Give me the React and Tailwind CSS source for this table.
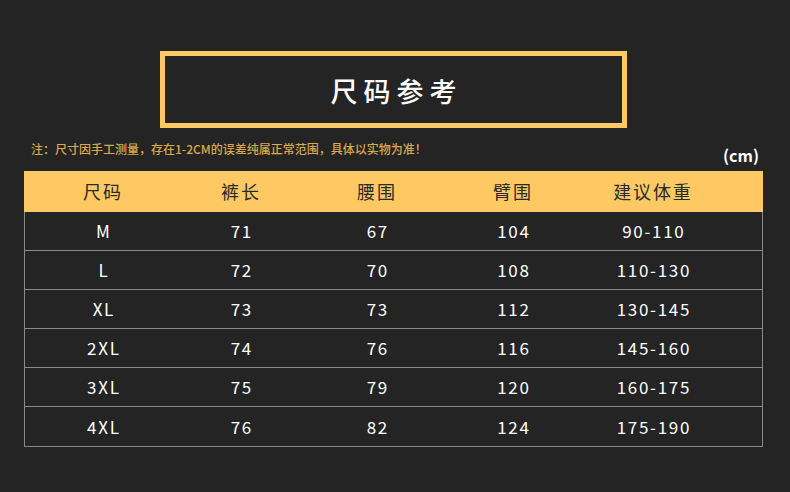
const headers = ['尺码', '裤长', '腰围', '臂围', '建议体重'];

const rows = [
  ['M', '71', '67', '104', '90-110'],
  ['L', '72', '70', '108', '110-130'],
  ['XL', '73', '73', '112', '130-145'],
  ['2XL', '74', '76', '116', '145-160'],
  ['3XL', '75', '79', '120', '160-175'],
  ['4XL', '76', '82', '124', '175-190'],
];

const font = { fontFamily: '"Noto Sans CJK SC", "Noto Sans", sans-serif' };
const cols = 'grid grid-cols-[156px_120px_152px_120px_160px_1fr]';

export default function App() {
  return (
    <div className="w-[790px] h-[492px] bg-[#242424] overflow-hidden" style={font}>
      <div className="flex justify-center pt-[51px] pr-[3px]">
        <div className="w-[467px] h-[77px] border-[5px] border-[#fec962] flex items-center justify-center">
          <h1 className="text-[27px] font-medium text-white tracking-[0.22em] leading-none pl-[0.22em] mt-[1px]">尺码参考</h1>
        </div>
      </div>

      <div className="flex items-end justify-between pl-[31px] pr-[31px] mt-[15px]">
        <p className="text-[12px] font-medium text-[#d9aa4c] leading-none mb-[6px]">
          注：尺寸因手工测量，存在1-2CM的误差纯属正常范围，具体以实物为准！
        </p>
        <span className="text-[16px] font-bold text-white leading-none mb-[-2px]">(cm)</span>
      </div>

      <div className="mx-[24px] mt-[10px] w-[739px] border-x border-b border-[#8a8a8a]">
        <div className={`${cols} h-[41px] bg-[#fec962] -mx-px items-center text-[18px] text-[#2a2a2a]`}>
          {headers.map((h) => (
            <div key={h} className="text-center tracking-[0.1em] pl-[0.1em]">{h}</div>
          ))}
        </div>
        {rows.map((r, i) => (
          <div
            key={r[0]}
            className={`${cols} h-[39px] items-center text-[17px] text-white ${i < rows.length - 1 ? 'border-b border-[#8a8a8a]' : ''}`}
          >
            {r.map((c, j) => (
              <div key={j} className="text-center tracking-[0.1em] pl-[0.1em]">{c}</div>
            ))}
          </div>
        ))}
      </div>
    </div>
  );
}
